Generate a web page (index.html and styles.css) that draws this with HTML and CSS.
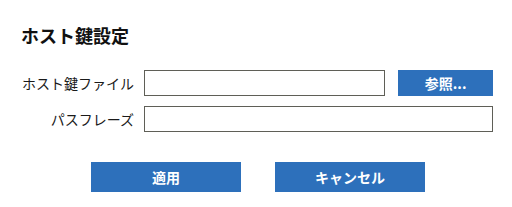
FILE: index.html
```html
<!DOCTYPE html>
<html lang="ja">
<head>
<meta charset="utf-8">
<link rel="stylesheet" href="styles.css">
</head>
<body>
<div class="dialog">
  <h1 class="title">ホスト鍵設定</h1>
  <div class="form">
    <label class="label">ホスト鍵ファイル</label>
    <div class="field-row">
      <input class="input input-file" type="text">
      <button class="btn btn-browse">参照...</button>
    </div>
    <label class="label">パスフレーズ</label>
    <div class="field-row">
      <input class="input input-pass" type="password">
    </div>
  </div>
  <div class="actions">
    <button class="btn btn-action">適用</button>
    <button class="btn btn-action">キャンセル</button>
  </div>
</div>
</body>
</html>
```

FILE: styles.css
```css
html, body {
  margin: 0;
  padding: 0;
  background: #ffffff;
}
body {
  font-family: "Noto Sans CJK JP", "Noto Sans", sans-serif;
  color: #1a1a1a;
}
.dialog {
  padding: 24px 0 0 21px;
  width: 490px;
}
.title {
  margin: 0;
  font-size: 18px;
  line-height: 22px;
  font-weight: bold;
  color: #111;
}
.form {
  margin-top: 24px;
  margin-left: 1px;
  display: grid;
  grid-template-columns: 112px 349px;
  column-gap: 10px;
  row-gap: 10px;
  align-items: center;
}
.label {
  font-size: 14px;
  text-align: right;
  line-height: 26px;
  color: #1a1a1a;
}
.field-row {
  display: flex;
  gap: 13px;
  height: 26px;
}
.input {
  box-sizing: border-box;
  height: 26px;
  border: 1px solid #5f5f57;
  border-radius: 0;
  margin: 0;
  padding: 0 4px;
  background: #fff;
  outline: none;
}
.input-file {
  width: 242px;
}
.input-pass {
  width: 349px;
}
.btn {
  box-sizing: border-box;
  border: none;
  margin: 0;
  padding: 0;
  background: #2d70bb;
  color: #fff;
  font-family: "Noto Sans CJK JP", "Noto Sans", sans-serif;
  font-weight: bold;
  font-size: 14px;
}
.btn-browse {
  width: 95px;
  height: 26px;
}
.actions {
  display: flex;
  gap: 34px;
  margin-top: 30px;
  padding-left: 70px;
}
.btn-action {
  width: 150px;
  height: 30px;
}
```
